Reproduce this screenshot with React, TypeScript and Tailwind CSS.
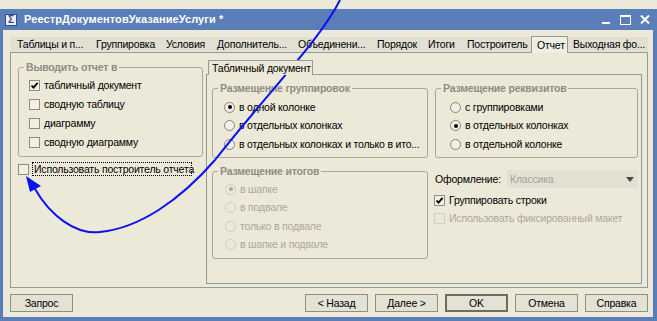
import React from 'react';

const tabs = [
  { label: 'Таблицы и п...', w: 79 },
  { label: 'Группировка', w: 70 },
  { label: 'Условия', w: 51 },
  { label: 'Дополнитель...', w: 81 },
  { label: 'Объединени...', w: 79 },
  { label: 'Порядок', w: 51 },
  { label: 'Итоги', w: 39 },
  { label: 'Построитель', w: 69 },
  { label: 'Отчет', w: 37, active: true },
  { label: 'Выходная фо...', w: 79 },
];

const CheckBox = ({ checked = false, disabled = false }) => (
  <span
    className={`flex w-[11px] h-[11px] shrink-0 items-center justify-center border ${
      disabled ? 'border-[#D2D0C3]' : 'border-[#8E8D7E] bg-[#F1EFE6]'
    }`}
  >
    {checked && (
      <svg width="9" height="9" viewBox="0 0 9 9">
        <path d="M1.5 4.5 L3.5 6.7 L7.6 1.8" fill="none" stroke="#000" strokeWidth="1.8" />
      </svg>
    )}
  </span>
);

const Radio = ({ on = false, disabled = false, label }: { on?: boolean; disabled?: boolean; label: string }) => (
  <div className="flex h-[18.5px] items-center gap-[4px]">
    <span
      className={`flex w-[11px] h-[11px] shrink-0 items-center justify-center rounded-full border ${
        disabled ? 'border-[#D0CEC1]' : 'border-[#85847A] bg-[#F1EFE6]'
      }`}
    >
      {on && <span className={`w-[4px] h-[4px] rounded-full ${disabled ? 'bg-[#A9A79A]' : 'bg-black'}`} />}
    </span>
    <span className={`whitespace-nowrap ${disabled ? 'text-[#ACA899]' : 'text-black'}`}>{label}</span>
  </div>
);

const Group = ({
  legend,
  className,
  inner,
  children,
}: {
  legend: string;
  className: string;
  inner: string;
  children: React.ReactNode;
}) => (
  <fieldset className={`border border-[#A9A897] rounded-[3px] ${className}`}>
    <legend className="ml-[5px] px-[2px] font-bold leading-[13px] text-[#8E8D82]">{legend}</legend>
    <div className={inner}>{children}</div>
  </fieldset>
);

const Button = ({ label, primary = false }: { label: string; primary?: boolean }) => (
  <button
    className={`w-[63px] h-[18px] flex items-center justify-center bg-[#E4E1D5] text-black ${
      primary ? 'border-2 border-[#6E6D62]' : 'border border-[#8F8E80]'
    }`}
  >
    {label}
  </button>
);

export default function App() {
  return (
    <div className="relative w-[657px] h-[321px] overflow-hidden bg-[#ECE9D8] pt-[9px] font-['Liberation_Sans',sans-serif] text-[10.5px] leading-[13px] tracking-[-0.2px] text-black">
      <div className="flex h-[312px] flex-col bg-[#5B7DB8]">
        {/* title bar */}
        <div className="flex h-[21px] shrink-0 items-center pl-[5px] pr-[7px]">
          <span className="flex w-[12px] h-[12px] items-center justify-center border border-[#2E4C8F] bg-[#EEF0F6] text-[10px] font-bold leading-none text-[#2E4C8F]">
            Σ
          </span>
          <span className="ml-[7px] text-[11px] font-bold tracking-[0.1px] text-white">РеестрДокументовУказаниеУслуги *</span>
          <div className="ml-auto flex items-center gap-[9px]">
            <svg width="9" height="10" viewBox="0 0 9 10">
              <rect x="0" y="7" width="8" height="2" fill="#fff" />
            </svg>
            <svg width="11" height="10" viewBox="0 0 11 10">
              <rect x="0.5" y="0.5" width="10" height="9" fill="none" stroke="#fff" />
              <rect x="0" y="0" width="11" height="2" fill="#fff" />
            </svg>
            <svg width="10" height="9" viewBox="0 0 10 9">
              <path d="M1 0.5 L9 8.5 M9 0.5 L1 8.5" stroke="#fff" strokeWidth="2" />
            </svg>
          </div>
        </div>

        {/* window body */}
        <div className="ml-[3px] mr-[4px] mb-[4px] flex flex-1 flex-col bg-[#ECE9D8] pl-[7px] pr-[5px] pt-[7px]">
          {/* tab strip */}
          <div className="flex h-[15px] items-end bg-[#E2DFD3] pl-[2px]">
            {tabs.map((t) =>
              t.active ? (
                <div
                  key={t.label}
                  style={{ width: t.w }}
                  className="relative top-[1px] z-10 flex h-[17px] shrink-0 items-center whitespace-nowrap border border-b-0 border-[#919B9C] bg-[#EFEDE4] pl-[5px]"
                >
                  {t.label}
                </div>
              ) : (
                <div key={t.label} style={{ width: t.w }} className="flex h-[15px] shrink-0 items-center whitespace-nowrap pl-[5px]">
                  {t.label}
                </div>
              )
            )}
          </div>

          {/* tab page */}
          <div className="flex h-[236px] border border-[#919B9C]">
            {/* left column */}
            <div className="flex w-[192px] flex-col pl-[7px] pt-[8px]">
              <Group legend="Выводить отчет в" className="h-[96px] w-[185px]" inner="pl-[10px] pt-[2px]">
                {[
                  ['табличный документ', true],
                  ['сводную таблицу', false],
                  ['диаграмму', false],
                  ['сводную диаграмму', false],
                ].map(([label, checked]) => (
                  <div key={label as string} className="flex h-[19px] items-center gap-[4px]">
                    <CheckBox checked={checked as boolean} />
                    <span className="whitespace-nowrap">{label}</span>
                  </div>
                ))}
              </Group>
              <div className="mt-[5px] flex h-[14px] items-center gap-[3px]">
                <CheckBox />
                <span className="flex h-[14px] w-[160px] items-center whitespace-nowrap border border-dotted border-black pl-[1px]">
                  Использовать построитель отчета
                </span>
              </div>
            </div>

            {/* right column: inner tabs */}
            <div className="ml-[3px] flex w-[436px] flex-col pt-[7px]">
              <div className="flex h-[15px]">
                <div className="relative z-10 ml-[2px] flex h-[15px] w-[105px] items-center whitespace-nowrap border border-b-0 border-[#919B9C] bg-[#ECE9D8] pl-[3px]">
                  Табличный документ
                </div>
              </div>
              <div className="-mt-[1px] h-[210px] border border-[#919B9C] pl-[5px] pt-[7px]">
                <div className="flex gap-[7px]">
                  <Group legend="Размещение группировок" className="h-[76px] w-[216px]" inner="pl-[11px] pt-[3px]">
                    <Radio on label="в одной колонке" />
                    <Radio label="в отдельных колонках" />
                    <Radio label="в отдельных колонках и только в ито..." />
                  </Group>
                  <Group legend="Размещение реквизитов" className="h-[76px] w-[203px]" inner="pl-[14px] pt-[3px]">
                    <Radio label="с группировками" />
                    <Radio on label="в отдельных колонках" />
                    <Radio label="в отдельной колонке" />
                  </Group>
                </div>

                <div className="mt-[7px] flex gap-[7px]">
                  <Group legend="Размещение итогов" className="h-[94px] w-[216px]" inner="pl-[12px] pt-[2px]">
                    <Radio on disabled label="в шапке" />
                    <Radio disabled label="в подвале" />
                    <Radio disabled label="только в подвале" />
                    <Radio disabled label="в шапке и подвале" />
                  </Group>
                  <div className="flex w-[203px] flex-col pt-[5px]">
                    <div className="flex h-[18px] items-center">
                      <span>Оформление:</span>
                      <div className="ml-auto flex h-[18px] w-[131px] items-center bg-[#E3E0D4] pl-[3px] pr-[4px]">
                        <span className="text-[#A5A397]">Классика</span>
                        <svg className="ml-auto" width="8" height="5" viewBox="0 0 8 5">
                          <path d="M0 0 H8 L4 5 Z" fill="#4A4A44" />
                        </svg>
                      </div>
                    </div>
                    <div className="mt-[3px] flex h-[18px] items-center gap-[4px] -ml-[1px]">
                      <CheckBox checked />
                      <span className="whitespace-nowrap">Группировать строки</span>
                    </div>
                    <div className="flex h-[18px] items-center gap-[4px] -ml-[1px]">
                      <CheckBox disabled />
                      <span className="whitespace-nowrap text-[#ACA899]">Использовать фиксированный макет</span>
                    </div>
                  </div>
                </div>
              </div>
            </div>
          </div>

          {/* buttons */}
          <div className="mt-[6px] flex h-[18px]">
            <Button label="Запрос" />
            <div className="ml-auto flex gap-[7px]">
              <Button label="< Назад" />
              <Button label="Далее >" />
              <Button label="OK" primary />
              <Button label="Отмена" />
              <Button label="Справка" />
            </div>
          </div>
        </div>
      </div>

      {/* hand-drawn blue arrow over the dialog */}
      <svg className="pointer-events-none absolute left-0 top-0" width="657" height="321" viewBox="0 0 657 321">
        <path
          d="M340 0 C 320 40, 270 90, 215 160 C 180 200, 140 228, 100 232 C 75 235, 50 215, 35 189"
          fill="none"
          stroke="#0A14F0"
          strokeWidth="2"
        />
        <polygon points="26,176 41,186 30,192" fill="#0A14F0" />
      </svg>
    </div>
  );
}
